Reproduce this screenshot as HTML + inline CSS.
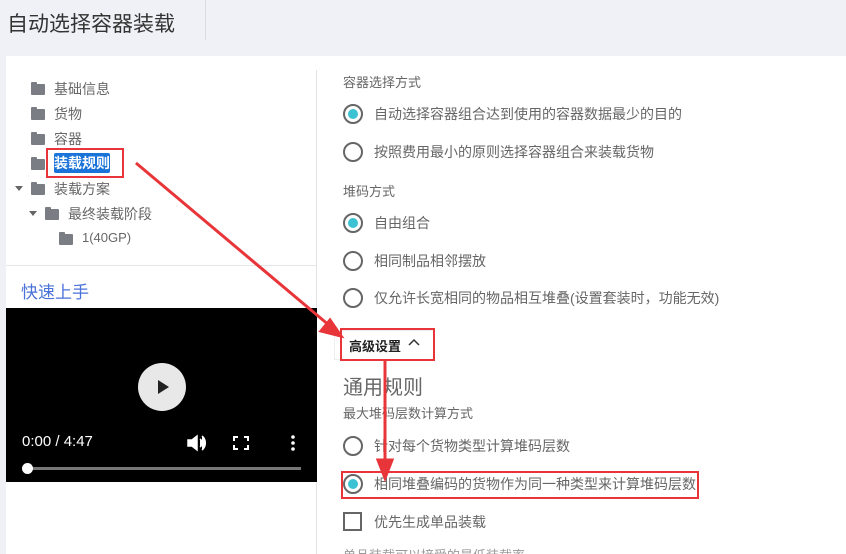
<!DOCTYPE html>
<html style="width:846px;height:554px;overflow:hidden"><head><meta charset="utf-8"><style>
*{margin:0;padding:0;box-sizing:border-box}
body{width:846px;height:554px;overflow:hidden;background:#f0f1f7;font-family:"Liberation Sans","Noto Sans CJK SC",sans-serif;position:relative;color:#555}
.abs{position:absolute}
.t{font-size:14px;color:#666;white-space:nowrap}
.fold{position:absolute;width:14px;height:11px;background:#7a7d84;border-radius:1px}
.fold:before{content:"";position:absolute;left:0;top:-2px;width:6px;height:3px;background:#7a7d84;border-radius:1px 1px 0 0}
.radio{position:absolute;width:20px;height:20px;border:2px solid #666;border-radius:50%}
.radio.on:after{content:"";position:absolute;left:3px;top:3px;width:10px;height:10px;border-radius:50%;background:#3cc2d2}
.red{position:absolute;border:2px solid #e8353a}
</style></head><body>
<div class="abs" style="left:7px;top:8px;font-size:21px;color:#333">自动选择容器装载</div>
<div class="abs" style="left:205px;top:0;width:1px;height:40px;background:#dcdde3"></div>
<div class="abs" style="left:6px;top:56px;width:840px;height:498px;background:#fff"></div>
<div class="abs" style="left:316px;top:70px;width:1px;height:484px;background:#e3e3e3"></div>
<div class="abs" style="left:6px;top:265px;width:310px;height:1px;background:#e6e6e6"></div>

<div class="fold" style="left:31px;top:84px"></div><div class="abs t" style="left:54px;top:79px">基础信息</div>
<div class="fold" style="left:31px;top:109px"></div><div class="abs t" style="left:54px;top:104px">货物</div>
<div class="fold" style="left:31px;top:134px"></div><div class="abs t" style="left:54px;top:129px">容器</div>
<div class="fold" style="left:31px;top:159px"></div>
<div class="abs" style="left:54px;top:153px;width:56px;height:20px;background:#1a73d9;color:#fff;font-size:14px;font-weight:bold;line-height:20px;border-radius:2px">装载规则</div>
<div class="red" style="left:46px;top:148px;width:78px;height:30px"></div>
<div class="abs" style="left:15px;top:186px;border:4px solid transparent;border-top:5px solid #666"></div>
<div class="fold" style="left:31px;top:184px"></div><div class="abs t" style="left:54px;top:179px">装载方案</div>
<div class="abs" style="left:29px;top:211px;border:4px solid transparent;border-top:5px solid #666"></div>
<div class="fold" style="left:45px;top:209px"></div><div class="abs t" style="left:68px;top:204px">最终装载阶段</div>
<div class="fold" style="left:59px;top:234px"></div><div class="abs t" style="left:82px;top:230px;font-size:13px">1(40GP)</div>

<div class="abs" style="left:21px;top:278px;font-size:17px;color:#4a72d8">快速上手</div>
<div class="abs" style="left:6px;top:308px;width:311px;height:174px;background:#000"></div>
<div class="abs" style="left:138px;top:363px;width:48px;height:48px;border-radius:50%;background:#e8e8e8"></div>
<div class="abs" style="left:158px;top:380px;border-left:11px solid #222;border-top:7px solid transparent;border-bottom:7px solid transparent"></div>
<div class="abs" style="left:22px;top:433px;color:#fff;font-size:15px">0:00 / 4:47</div>
<svg class="abs" style="left:186px;top:433px" width="120" height="20" viewBox="0 0 120 20"><path d="M2 7h4l5-4v14l-5-4H2z M14 6a5 5 0 0 1 0 8 M16 3a9 9 0 0 1 0 14" fill="#fff" stroke="#fff" stroke-width="1.5"/><path d="M52 4h-4v4 M58 4h4v4 M52 16h-4v-4 M58 16h4v-4" fill="none" stroke="#fff" stroke-width="2"/><circle cx="107" cy="4" r="1.8" fill="#fff"/><circle cx="107" cy="10" r="1.8" fill="#fff"/><circle cx="107" cy="16" r="1.8" fill="#fff"/></svg>
<div class="abs" style="left:28px;top:467px;width:273px;height:3px;background:#777"></div>
<div class="abs" style="left:22px;top:463px;width:11px;height:11px;border-radius:50%;background:#fff"></div>

<div class="abs t" style="left:343px;top:72px;font-size:13px">容器选择方式</div>
<div class="radio on" style="left:343px;top:104px"></div><div class="abs t" style="left:374px;top:104px">自动选择容器组合达到使用的容器数据最少的目的</div>
<div class="radio" style="left:343px;top:142px"></div><div class="abs t" style="left:374px;top:142px">按照费用最小的原则选择容器组合来装载货物</div>
<div class="abs t" style="left:343px;top:181px;font-size:13px">堆码方式</div>
<div class="radio on" style="left:343px;top:213px"></div><div class="abs t" style="left:374px;top:213px">自由组合</div>
<div class="radio" style="left:343px;top:251px"></div><div class="abs t" style="left:374px;top:251px">相同制品相邻摆放</div>
<div class="radio" style="left:343px;top:288px"></div><div class="abs t" style="left:374px;top:288px">仅允许长宽相同的物品相互堆叠(设置套装时，功能无效)</div>
<div class="abs" style="left:334px;top:330px;width:100px;height:30px;border:1px solid #eee"></div>
<div class="abs" style="left:349px;top:336px;font-size:13px;font-weight:bold;color:#222">高级设置</div>
<svg class="abs" style="left:408px;top:337px" width="12" height="10"><path d="M1 8l5-5 5 5" fill="none" stroke="#333" stroke-width="1.5"/></svg>
<div class="red" style="left:340px;top:328px;width:95px;height:33px"></div>
<div class="abs" style="left:343px;top:371px;font-size:20px;color:#666">通用规则</div>
<div class="abs t" style="left:343px;top:403px;font-size:13px">最大堆码层数计算方式</div>
<div class="radio" style="left:343px;top:436px"></div><div class="abs t" style="left:374px;top:436px">针对每个货物类型计算堆码层数</div>
<div class="radio on" style="left:343px;top:474px"></div><div class="abs t" style="left:374px;top:474px">相同堆叠编码的货物作为同一种类型来计算堆码层数</div>
<div class="red" style="left:341px;top:471px;width:358px;height:28px"></div>
<div class="abs" style="left:343px;top:512px;width:19px;height:19px;border:2px solid #666"></div><div class="abs t" style="left:374px;top:512px">优先生成单品装载</div>
<div class="abs t" style="left:343px;top:545px;font-size:13px;color:#999">单品装载可以接受的最低装载率</div>

<svg class="abs" style="left:0;top:0" width="846" height="554"><g stroke="#e8353a" stroke-width="3" fill="#e8353a"><line x1="136" y1="163" x2="330" y2="326"/><path d="M341 336l-20-5 9-11z"/><line x1="385" y1="360" x2="385" y2="462"/><path d="M385 478l-7-18h14z"/></g></svg>
</body></html>
